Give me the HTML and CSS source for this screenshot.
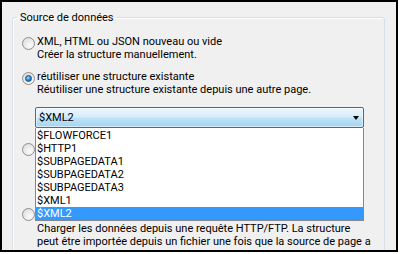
FILE: index.html
```html
<!DOCTYPE html>
<html lang="fr">
<head>
<meta charset="utf-8">
<title>Source de données</title>
<link rel="stylesheet" href="styles.css">
</head>
<body>
<div class="window">
  <fieldset class="group">
    <legend>Source de données</legend>
    <div class="option first">
      <span class="radio"></span>
      <div class="text">
        <div>XML, HTML ou JSON nouveau ou vide</div>
        <div>Créer la structure manuellement.</div>
      </div>
    </div>
    <div class="option second">
      <span class="radio checked"></span>
      <div class="text">
        <div>réutiliser une structure existante</div>
        <div>Réutiliser une structure existante depuis une autre page.</div>
      </div>
    </div>
    <div class="combo-wrap">
      <div class="combo">
        <span class="combo-value">$XML2</span>
        <span class="arrow"></span>
      </div>
      <ul class="list">
        <li>$FLOWFORCE1</li>
        <li>$HTTP1</li>
        <li>$SUBPAGEDATA1</li>
        <li>$SUBPAGEDATA2</li>
        <li>$SUBPAGEDATA3</li>
        <li>$XML1</li>
        <li class="selected">$XML2</li>
      </ul>
    </div>
    <div class="option third">
      <span class="radio"></span>
      <div class="text covered three-lines"></div>
    </div>
    <div class="option fourth">
      <span class="radio"></span>
      <div class="text">
        <div class="covered one-line"></div>
        <div>Charger les données depuis une requête HTTP/FTP. La structure peut être importée depuis un fichier une fois que la source de page a été définie.</div>
      </div>
    </div>
  </fieldset>
</div>
</body>
</html>
```

FILE: styles.css
```css
html, body {
  margin: 0;
  background: #fff;
}

body {
  font: 11px/13px Roboto, "Liberation Sans", Arial, sans-serif;
  color: #000;
}

.window {
  box-sizing: border-box;
  width: 398px;
  height: 252px;
  border: 2px solid #000;
  background: #f0f0f0;
  overflow: hidden;
  padding-left: 10px;
}

.group {
  box-sizing: border-box;
  width: 373px;
  min-height: 300px;
  margin: 9px 0 0 0;
  padding: 0;
  border: 1px solid #d5dfe5;
  border-radius: 3px;
  box-shadow: inset 1px 1px 0 #fff;
}

.group legend {
  margin-left: 4px;
  padding: 0 3px;
  line-height: 13px;
}

.option {
  display: grid;
  grid-template-columns: 13px 1fr;
  column-gap: 2px;
  padding: 0 11px 0 9px;
}

.option.first { margin-top: 11px; }
.option.second { margin-top: 9px; }
.option.third { margin-top: 13px; }
.option.fourth { margin-top: 29px; }

.covered.three-lines { height: 39px; }
.covered.one-line { height: 13px; }

.radio {
  box-sizing: border-box;
  width: 13px;
  height: 13px;
  margin-top: 2px;
  border-radius: 50%;
  border: 1px solid #8e8f8f;
  background: radial-gradient(circle at 65% 70%, #fbfbfb 0%, #ececec 45%, #d6d6d6 100%);
  position: relative;
}

.option.fourth .radio {
  margin-top: -1px;
}

.radio.checked::after {
  content: "";
  position: absolute;
  left: 2px;
  top: 2px;
  width: 7px;
  height: 7px;
  box-sizing: border-box;
  border-radius: 50%;
  border: 1px solid #1d4a78;
  background: radial-gradient(circle at 40% 35%, #a6dcf8 0%, #3a8fd6 45%, #0d4f92 100%);
}

.combo-wrap {
  position: relative;
  margin: 11px 0 0 22px;
  width: 329px;
}

.combo {
  box-sizing: border-box;
  height: 21px;
  border: 1px solid #3c6e96;
  border-radius: 2px;
  background: linear-gradient(#eaf6fd 0%, #d7eefb 45%, #bde3f8 55%, #a4d4f1 100%);
  box-shadow: inset 0 0 0 1px rgba(255, 255, 255, 0.55);
  display: flex;
  align-items: center;
  justify-content: space-between;
  padding: 0 4px 0 3px;
  line-height: 19px;
}

.arrow {
  width: 0;
  height: 0;
  border-left: 3.5px solid transparent;
  border-right: 3.5px solid transparent;
  border-top: 4px solid #000;
}

.list {
  position: absolute;
  top: 100%;
  left: 0;
  z-index: 2;
  box-sizing: border-box;
  width: 329px;
  margin: 0;
  padding: 1px 0 0 0;
  list-style: none;
  background: #fff;
  border: 1px solid #828790;
  border-top: none;
}

.list li {
  padding-left: 1px;
  line-height: 13px;
  height: 13px;
}

.list li.selected {
  background: #3399ff;
  color: #fff;
}
```
